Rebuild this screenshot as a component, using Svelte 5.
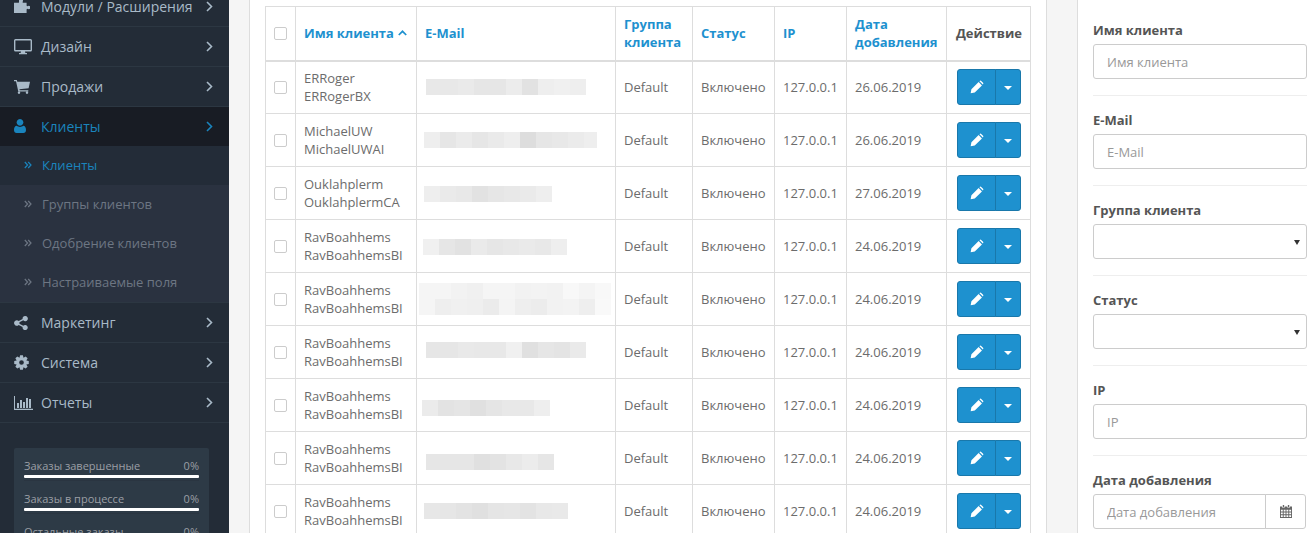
<script lang="ts">
	// gear outline, computed so the teeth stay even
	function cogPath(teeth: number, outer: number, inner: number, hole: number) {
		let d = '';
		const step = (Math.PI * 2) / teeth;
		for (let i = 0; i < teeth; i++) {
			const a = i * step;
			const pts = [
				[inner, a - step * 0.5],
				[outer, a - step * 0.24],
				[outer, a + step * 0.24]
			];
			for (const [r, t] of pts) {
				d += `${d ? 'L' : 'M'}${(8 + r * Math.cos(t)).toFixed(2)} ${(8 + r * Math.sin(t)).toFixed(2)}`;
			}
		}
		return `${d}Z M${8 - hole} 8a${hole} ${hole} 0 1 0 ${hole * 2} 0a${hole} ${hole} 0 1 0 ${-hole * 2} 0Z`;
	}

	const icons: Record<string, { box: string; w: number; h: number; d: string }> = {
		puzzle: {
			box: '0 0 16 16',
			w: 16,
			h: 16,
			d: 'M5 1.500a2 2 0 0 1 4 0c0 .8-.4 1.200-.4 1.700 0 .4.5.5 1.400.5h2.600v2.600c0 .7.3 1 .7 1 .5 0 .9-.5 1.500-.5a1.700 1.700 0 0 1 0 3.400c-.6 0-1-.5-1.500-.5-.4 0-.7.3-.7 1V14H0V3.700h3.500c1 0 1.500-.1 1.500-.5S5 2.300 5 1.500Z'
		},
		desktop: {
			box: '0 0 18 16',
			w: 18,
			h: 16,
			d: 'M1.500 0h15A1.500 1.500 0 0 1 18 1.500V11a1.500 1.500 0 0 1-1.500 1.500H11l.4 1.600H13V15.200H5V14.100h1.600L7 12.500H1.500A1.500 1.500 0 0 1 0 11V1.500A1.500 1.500 0 0 1 1.500 0ZM1.400 1.400V11h15.200V1.400Z'
		},
		cart: {
			box: '0 0 16 14',
			w: 16,
			h: 14,
			d: 'M0 0h2.800l.5 1.700H16l-1.400 6.500-9.200 1 .3 1.100H14.300v1.200H4.300L2 1.200H0ZM5 11.500a1.200 1.200 0 1 0 .01 0ZM13 11.500a1.200 1.200 0 1 0 .01 0Z'
		},
		user: {
			box: '0 0 12 14',
			w: 12,
			h: 14,
			d: 'M6 0a3.400 3.400 0 1 1-.01 0ZM2.800 6.800C3.600 7.500 4.700 8 6 8s2.400-.5 3.200-1.200C11 6.900 12 8.600 12 11c0 1.800-1 3-2.600 3H2.600C1 14 0 12.800 0 11c0-2.400 1-4.100 2.800-4.200Z'
		},
		share: {
			box: '0 0 14 14',
			w: 14,
			h: 14,
			d: 'M11.300 0a2.600 2.600 0 1 1-2 4.300L5.400 6.300a2.700 2.700 0 0 1 0 1.400l3.900 2a2.600 2.600 0 1 1-.7 1.300l-3.900-2a2.700 2.700 0 1 1 0-4l3.900-2A2.600 2.600 0 0 1 11.300 0Z'
		},
		cog: { box: '0 0 16 16', w: 15, h: 15, d: cogPath(8, 7.9, 5.6, 2.5) },
		bars: {
			box: '0 0 19 14',
			w: 19,
			h: 14,
			d: 'M0 0h1v12.800h18V14H0ZM3 7h2v5H3ZM6 4h2v8H6ZM9 6h2v6H9ZM12 2h2v10h-2ZM15 3h2v9h-2Z'
		}
	};

	const menuTop = [
		{ label: 'Модули / Расширения', icon: 'puzzle' },
		{ label: 'Дизайн', icon: 'desktop' },
		{ label: 'Продажи', icon: 'cart' }
	];
	const subItems = ['Клиенты', 'Группы клиентов', 'Одобрение клиентов', 'Настраиваемые поля'];
	const menuBottom = [
		{ label: 'Маркетинг', icon: 'share' },
		{ label: 'Система', icon: 'cog' },
		{ label: 'Отчеты', icon: 'bars' }
	];
	const stats = ['Заказы завершенные', 'Заказы в процессе', 'Остальные заказы'];

	const columns = [
		{ label: 'Имя клиента', sorted: true },
		{ label: 'E-Mail' },
		{ label: 'Группа клиента' },
		{ label: 'Статус' },
		{ label: 'IP' },
		{ label: 'Дата добавления' }
	];

	// blurred addresses: offset in the cell, then grey levels of the 16px mosaic blocks
	const rows = [
		{ name: ['ERRoger', 'ERRogerBX'], date: '26.06.2019', x: 9, y: 0, blur: [['e8', 'e8', 'ea', 'e6', 'e6', 'ec', 'e2', 'ee', 'f0', 'ee']] },
		{ name: ['MichaelUW', 'MichaelUWAI'], date: '26.06.2019', x: 7, y: 0, w: 173, blur: [['ee', 'e6', 'eb', 'e6', 'ea', 'ee', 'dd', 'e6', 'e8', 'eb', 'ee']] },
		{ name: ['Ouklahplerm', 'OuklahplermCA'], date: '27.06.2019', x: 7, y: 1, blur: [['ee', 'ea', 'e8', 'e2', 'e6', 'e8', 'ea', 'ee']] },
		{ name: ['RavBoahhems', 'RavBoahhemsBI'], date: '24.06.2019', x: 6, y: 1, blur: [['f0', 'e6', 'e2', 'ea', 'e6', 'e8', 'ea', 'e8', 'ee']] },
		{
			name: ['RavBoahhems', 'RavBoahhemsBI'],
			date: '24.06.2019',
			x: 2,
			y: 0,
			blur: [
				['f5', 'f5', 'f2', 'f0', 'f5', 'f5', 'f2', 'f3', 'f2', 'f8', 'f4', 'f8'],
				['f5', 'ee', 'f0', 'ef', 'eb', 'f4', 'ee', 'ec', 'f2', 'f3', 'ee', 'f9']
			]
		},
		{ name: ['RavBoahhems', 'RavBoahhemsBI'], date: '24.06.2019', x: 9, y: -2, blur: [['e6', 'e6', 'e9', 'e8', 'e8', 'f0', 'e0', 'e6', 'e4', 'ea']] },
		{ name: ['RavBoahhems', 'RavBoahhemsBI'], date: '24.06.2019', x: 5, y: 3, blur: [['eb', 'e3', 'e5', 'e0', 'e5', 'e8', 'e8', 'ee']] },
		{ name: ['RavBoahhems', 'RavBoahhemsBI'], date: '24.06.2019', x: 9, y: 4, blur: [['e6', 'e6', 'e6', 'e0', 'e3', 'e8', 'ec', 'e6']] },
		{ name: ['RavBoahhems', 'RavBoahhemsBI'], date: '24.06.2019', x: 7, y: 0, blur: [['e7', 'e6', 'e3', 'e0', 'e5', 'e6', 'e3', 'e8', 'e9']] }
	];

	const filters = [
		{ label: 'Имя клиента', kind: 'text' },
		{ label: 'E-Mail', kind: 'text' },
		{ label: 'Группа клиента', kind: 'select' },
		{ label: 'Статус', kind: 'select' },
		{ label: 'IP', kind: 'text' },
		{ label: 'Дата добавления', kind: 'date' }
	];
</script>

{#snippet icon(name: string)}
	<span class="menu-icon">
		<svg viewBox={icons[name].box} width={icons[name].w} height={icons[name].h} aria-hidden="true">
			<path d={icons[name].d} fill="currentColor" fill-rule="evenodd" />
		</svg>
	</span>
{/snippet}

{#snippet chevron()}
	<svg class="chevron" viewBox="0 0 7 11" width="7" height="11" aria-hidden="true">
		<path d="M1 1l4.500 4.500L1 10" fill="none" stroke="currentColor" stroke-width="1.600" />
	</svg>
{/snippet}

<div class="page">
	<aside class="sidebar">
		<ul class="menu">
			{#each menuTop as item}
				<li class="menu-item">{@render icon(item.icon)}<span class="menu-label">{item.label}</span>{@render chevron()}</li>
			{/each}
			<li class="menu-item active">{@render icon('user')}<span class="menu-label">Клиенты</span>{@render chevron()}</li>
			<li class="submenu">
				{#each subItems as sub, i}
					<div class="sub-item" class:current={i === 0}>
						<svg viewBox="0 0 8 8" width="8" height="8" aria-hidden="true">
							<path d="M.8 1l2.800 3L.8 7M4.200 1L7 4 4.200 7" fill="none" stroke="currentColor" stroke-width="1.200" />
						</svg>
						<span>{sub}</span>
					</div>
				{/each}
			</li>
			{#each menuBottom as item}
				<li class="menu-item">{@render icon(item.icon)}<span class="menu-label">{item.label}</span>{@render chevron()}</li>
			{/each}
		</ul>

		<div class="stats">
			{#each stats as stat}
				<div class="stat">
					<div class="stat-text"><span>{stat}</span><span>0%</span></div>
					<div class="stat-bar"></div>
				</div>
			{/each}
		</div>
	</aside>

	<main class="content">
		<section class="panel">
			<table>
				<colgroup>
					<col style="width: 30px" />
					<col style="width: 121px" />
					<col style="width: 199px" />
					<col style="width: 77px" />
					<col style="width: 82px" />
					<col style="width: 72px" />
					<col style="width: 100px" />
					<col style="width: 84px" />
				</colgroup>
				<thead>
					<tr>
						<th class="check"><input type="checkbox" /></th>
						{#each columns as col}
							<th>
								<span class="sort-link">{col.label}</span>
								{#if col.sorted}
									<svg class="sort-arrow" viewBox="0 0 8 5" width="9" height="6" aria-hidden="true">
										<path d="M.7 4.300L4 1l3.300 3.300" fill="none" stroke="currentColor" stroke-width="1.500" />
									</svg>
								{/if}
							</th>
						{/each}
						<th class="action-head">Действие</th>
					</tr>
				</thead>
				<tbody>
					{#each rows as row}
						<tr>
							<td class="check"><input type="checkbox" /></td>
							<td>{row.name[0]}<br />{row.name[1]}</td>
							<td class="email">
								<div class="mosaic-wrap" style="margin-left: {row.x}px; transform: translateY({row.y}px); width: {row.w ?? 200}px">
									{#each row.blur as line}
										<div class="mosaic">
											{#each line as grey}
												<span style="background: #{grey}{grey}{grey}"></span>
											{/each}
										</div>
									{/each}
								</div>
							</td>
							<td>Default</td>
							<td>Включено</td>
							<td>127.0.0.1</td>
							<td>{row.date}</td>
							<td class="actions">
								<div class="btn-group">
									<button type="button" class="btn edit" aria-label="Изменить">
										<svg viewBox="0 0 13 13" width="14" height="14" aria-hidden="true">
											<path d="M.6 12.400l.7-3.800L8 1.900 11.100 5l-6.700 6.700ZM9 .9a1 1 0 0 1 1.400 0l1.700 1.700a1 1 0 0 1 0 1.400l-.2.2L8.800 1.100Z" fill="#fff" />
										</svg>
									</button>
									<button type="button" class="btn toggle" aria-label="Ещё">
										<span class="caret"></span>
									</button>
								</div>
							</td>
						</tr>
					{/each}
				</tbody>
			</table>
		</section>

		<section class="filter">
			{#each filters as field}
				<div class="field">
					<div class="field-label">{field.label}</div>
					{#if field.kind === 'text'}
						<input class="control" type="text" placeholder={field.label} />
					{:else if field.kind === 'select'}
						<div class="select-wrap">
							<select class="control"></select>
						</div>
					{:else}
						<div class="date-group">
							<input class="control" type="text" placeholder={field.label} />
							<span class="date-addon">
								<svg viewBox="0 0 13 14" width="12" height="13" aria-hidden="true">
									<path
										d="M3 0h1.500v2H3ZM8.500 0H10v2H8.500ZM0 1.500h2.200v1.300h3V1.500h2.600v1.300h3V1.500H13V14H0ZM1 5v2h2V5Zm3 0v2h2V5Zm3 0v2h2V5Zm3 0v2h2V5ZM1 8v2h2V8Zm3 0v2h2V8Zm3 0v2h2V8Zm3 0v2h2V8ZM1 11v2h2v-2Zm3 0v2h2v-2Zm3 0v2h2v-2Zm3 0v2h2v-2Z"
										fill="#666"
										fill-rule="evenodd"
									/>
								</svg>
							</span>
						</div>
					{/if}
				</div>
			{/each}
		</section>
	</main>
</div>

<style>
	:global(body) {
		margin: 0;
		background: #f5f5f5;
	}

	.page {
		display: flex;
		height: 533px;
		overflow: hidden;
		font-family: 'Open Sans', sans-serif;
		font-size: 13px;
		color: #6c6c6c;
	}

	.sidebar {
		flex: 0 0 229px;
		background: #232c37;
		overflow: hidden;
	}

	.menu {
		list-style: none;
		margin: -13px 0 0;
		padding: 0;
	}

	.menu-item {
		display: flex;
		align-items: center;
		height: 39px;
		padding: 0 16px 0 14px;
		border-bottom: 1px solid #2c3742;
		color: #a9bac8;
		font-size: 14px;
	}

	.menu-item.active {
		height: 38px;
		background: #181c24;
		border-bottom-color: #181c24;
		color: #1a84bd;
	}

	.menu-icon {
		display: flex;
		align-items: center;
		flex: 0 0 27px;
	}

	.menu-label {
		flex: 1;
		white-space: nowrap;
	}

	.submenu {
		background: #2a3240;
		border-bottom: 1px solid #2c3742;
	}

	.sub-item {
		display: flex;
		align-items: center;
		gap: 10px;
		height: 38px;
		padding: 0 0 1px 24px;
		color: #6d7683;
	}

	.sub-item.current {
		background: #232c38;
		color: #1a84bd;
	}

	.stats {
		margin: 25px 20px 0 14px;
		padding: 0 10px;
		background: #2d3a46;
		border-radius: 2px;
	}

	.stat {
		height: 33px;
		padding-top: 10px;
		box-sizing: border-box;
		border-bottom: 1px solid #2a3541;
	}

	.stat-text {
		display: flex;
		justify-content: space-between;
		font-size: 11px;
		line-height: 15px;
		color: #9b9fa5;
	}

	.stat-bar {
		height: 3px;
		margin-top: 2px;
		background: #fff;
		border-radius: 1px;
	}

	.content {
		display: flex;
		flex: 1;
		min-width: 0;
		padding-left: 20px;
		gap: 30px;
	}

	.panel {
		flex: 0 0 798px;
		box-sizing: border-box;
		padding: 6px 15px 0;
		background: #fff;
		border: solid #ddd;
		border-width: 0 1px;
	}

	table {
		table-layout: fixed;
		width: 765px;
		border-collapse: collapse;
	}

	th,
	td {
		padding: 0 8px;
		border: 1px solid #ddd;
		vertical-align: middle;
		text-align: left;
		line-height: 18px;
	}

	th {
		height: 54px;
		box-sizing: border-box;
		border-bottom-width: 2px;
		color: #1e91cf;
		font-weight: 700;
	}

	td {
		height: 53px;
		box-sizing: border-box;
		white-space: nowrap;
	}

	th.action-head {
		color: #555;
		white-space: nowrap;
		text-align: right;
	}

	.sort-arrow {
		margin-left: 1px;
		vertical-align: 2px;
	}

	.check {
		padding: 0;
		text-align: center;
	}

	input[type='checkbox'] {
		appearance: none;
		display: block;
		width: 13px;
		height: 13px;
		margin: 0 auto;
		background: #fff;
		border: 1px solid #ccc;
		border-radius: 2px;
		box-sizing: border-box;
	}

	.email {
		padding: 0;
	}

	.mosaic-wrap {
		overflow: hidden;
	}

	.mosaic {
		display: flex;
		height: 16px;
	}

	.mosaic span {
		flex: 0 0 16px;
	}

	.actions {
		padding: 0 9px 0 10px;
	}

	.btn-group {
		display: flex;
	}

	.btn {
		display: flex;
		align-items: center;
		justify-content: center;
		height: 36px;
		padding: 0;
		background: #1e91cf;
		border: 1px solid #1978ab;
	}

	.btn.edit {
		width: 39px;
		border-radius: 3px 0 0 3px;
	}

	.btn.toggle {
		width: 26px;
		margin-left: -1px;
		border-radius: 0 3px 3px 0;
	}

	.caret {
		width: 0;
		height: 0;
		margin-top: 2px;
		border: solid transparent;
		border-width: 4px 4px 0;
		border-top-color: #fff;
	}

	.filter {
		flex: 1;
		min-width: 0;
		box-sizing: border-box;
		padding: 0 9px 0 15px;
		background: #fff;
		border-left: 1px solid #ddd;
	}

	.field {
		height: 90px;
		box-sizing: border-box;
		padding-top: 15px;
		border-bottom: 1px solid #eee;
	}

	.field:first-child {
		height: 96px;
		padding-top: 21px;
	}

	.field-label {
		height: 23px;
		line-height: 18px;
		font-weight: 700;
		color: #555;
	}

	.control {
		display: block;
		width: 100%;
		height: 35px;
		box-sizing: border-box;
		padding: 0 13px;
		background: #fff;
		border: 1px solid #ccc;
		border-radius: 3px;
		font: inherit;
		color: #555;
		outline: none;
	}

	.control::placeholder {
		color: #999;
		opacity: 1;
	}

	select.control {
		appearance: none;
	}

	.select-wrap {
		position: relative;
	}

	.select-wrap::after {
		content: '';
		position: absolute;
		top: 16px;
		right: 7px;
		border: solid transparent;
		border-width: 5px 3px 0;
		border-top-color: #333;
	}

	.date-group {
		display: flex;
	}

	.date-group .control {
		flex: 1;
		min-width: 0;
		border-radius: 3px 0 0 3px;
	}

	.date-addon {
		display: flex;
		align-items: center;
		justify-content: center;
		flex: 0 0 41px;
		box-sizing: border-box;
		margin-left: -1px;
		margin-right: 1px;
		border: 1px solid #ccc;
		border-radius: 0 3px 3px 0;
	}
</style>
